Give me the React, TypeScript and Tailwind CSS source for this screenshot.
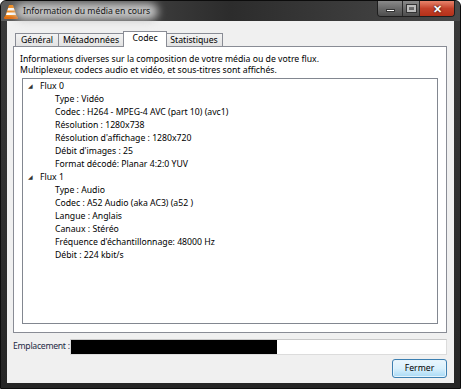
const font = { fontFamily: '"Noto Sans", "Open Sans", sans-serif' };

const tabs = [
  { label: "Général", w: "w-[44px]" },
  { label: "Métadonnées", w: "w-[66px]" },
  { label: "Codec", w: "w-[44px]" },
  { label: "Statistiques", w: "w-[58px]" },
];

const streams = [
  {
    name: "Flux 0",
    rows: [
      "Type : Vidéo",
      "Codec : H264 - MPEG-4 AVC (part 10) (avc1)",
      "Résolution : 1280x738",
      "Résolution d'affichage : 1280x720",
      "Débit d'images : 25",
      "Format décodé: Planar 4:2:0 YUV",
    ],
  },
  {
    name: "Flux 1",
    rows: [
      "Type : Audio",
      "Codec : A52 Audio (aka AC3) (a52 )",
      "Langue : Anglais",
      "Canaux : Stéréo",
      "Fréquence d'échantillonnage: 48000 Hz",
      "Débit : 224 kbit/s",
    ],
  },
];

function Cone() {
  return (
    <svg width="14" height="15" viewBox="0 0 14 15">
      <path d="M5 1h4l4 12H1z" fill="#f08a1c" />
      <path d="M4.2 4h5.6l0.8 2.5H3.4zM2.8 8.5h8.4l0.8 2.5H2z" fill="#fff" />
      <rect x="0" y="12.5" width="14" height="2.5" rx="1" fill="#e06d10" />
    </svg>
  );
}

export default function App() {
  return (
    <div
      className="w-[461px] h-[389px] bg-gradient-to-b from-[#3a3a3a] to-[#262626] border border-[#0c0c0c] rounded-t-[6px] flex flex-col text-[8.7px] text-black overflow-hidden"
      style={font}
    >
      {/* title bar */}
      <div className="h-[20px] flex items-start bg-gradient-to-r from-[#5c5c5c] via-[#2c2c2c] to-[#4a4a4a]">
        <div className="flex items-center gap-[5px] pl-[3px] pt-[3px]">
          <Cone />
          <span className="relative text-[#161616]">
            <span className="absolute -inset-x-[8px] -inset-y-[2px] rounded-full bg-[#c4c4c4] blur-[4px]" />
            <span className="relative">Information du média en cours</span>
          </span>
        </div>
        <div className="ml-auto mr-[5px] flex h-[16px] border border-[#1e1e1e] border-t-0 rounded-b-[4px] overflow-hidden">
          <div className="w-[25px] bg-gradient-to-b from-[#8a8a8a] via-[#6a6a6a] to-[#4e4e4e] border-r border-[#2a2a2a] flex items-center justify-center">
            <div className="w-[9px] h-[3px] bg-white mt-[4px] border border-[#333]" />
          </div>
          <div className="w-[17px] bg-gradient-to-b from-[#8a8a8a] via-[#6a6a6a] to-[#4e4e4e] border-r border-[#2a2a2a] flex items-center justify-center">
            <div className="w-[9px] h-[7px] border-2 border-[#bdbdbd] outline outline-1 outline-[#333]" />
          </div>
          <div className="w-[34px] bg-gradient-to-b from-[#e8836b] via-[#c4412a] to-[#b53018] flex items-center justify-center text-white font-bold text-[11px] leading-none [text-shadow:0_0_2px_#000]">
            ✕
          </div>
        </div>
      </div>

      {/* client */}
      <div className="flex-1 mx-[6px] mb-[5px] bg-[#f0f0f0] flex flex-col pl-[6px] pr-[7px] pt-[10px]">
        <div className="flex items-end pl-[2px] h-[16px]">
          {tabs.map((t) => {
            const active = t.label === "Codec";
            return (
              <div
                key={t.label}
                className={
                  active
                    ? `${t.w} h-[16px] bg-white border border-[#898c95] border-b-0 -mx-[1px] z-10 flex items-center justify-center pb-[1px]`
                    : `${t.w} h-[14px] bg-gradient-to-b from-[#f3f3f3] to-[#e1e1e1] border border-[#898c95] border-b-0 -ml-[1px] first:ml-0 flex items-center justify-center`
                }
              >
                {t.label}
              </div>
            );
          })}
        </div>
        <div className="h-[287px] bg-white border border-[#898c95] -mt-[1px] flex flex-col px-[6px] pt-[7px]">
          <p className="leading-[11px]">
            Informations diverses sur la composition de votre média ou de votre flux.
            <br />
            Multiplexeur, codecs audio et vidéo, et sous-titres sont affichés.
          </p>
          <div className="mt-[2px] mx-[2px] h-[246px] border border-[#828790] pt-[1px]">
            {streams.map((s) => (
              <div key={s.name}>
                <div className="h-[13px] flex items-center">
                  <span className="w-[17px] text-[6px] text-[#333] pl-[5px]">◢</span>
                  <span>{s.name}</span>
                </div>
                {s.rows.map((r) => (
                  <div key={r} className="h-[13px] leading-[13px] pl-[32px]">
                    {r}
                  </div>
                ))}
              </div>
            ))}
          </div>
        </div>

        <div className="mt-[6px] flex items-center h-[16px]">
          <span className="w-[57px] shrink-0 whitespace-nowrap tracking-[-0.3px] text-[#1e2a44]">Emplacement :</span>
          <div className="flex-1 h-[16px] border border-[#dcdcdc] border-t-[#c8c8c8] bg-white flex">
            <div className="w-[206px] h-full bg-black" />
          </div>
        </div>
        <div className="mt-[4px] flex justify-end">
          <div className="w-[55px] h-[19px] rounded-[3px] border border-[#3c7fb1] bg-gradient-to-b from-[#eaf6fd] via-[#d9f0fc] to-[#a7d9f5] flex items-center justify-center shadow-[inset_0_0_0_1px_#e6f4fc]">
            Fermer
          </div>
        </div>
      </div>
    </div>
  );
}
